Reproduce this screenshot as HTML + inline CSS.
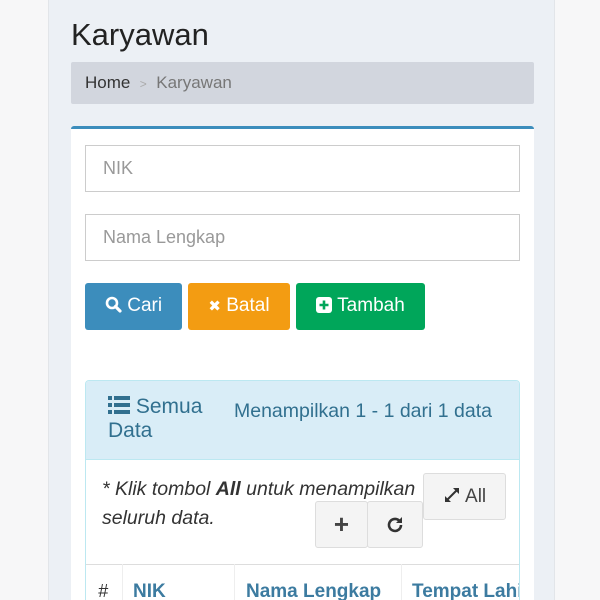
<!DOCTYPE html>
<html style="width:600px;height:600px;overflow:hidden"><head><style>
*{box-sizing:border-box;margin:0;padding:0}
body{width:600px;height:600px;overflow:hidden;background:#f7f7f8;font-family:"Liberation Sans",sans-serif;position:relative}
.wrap{position:absolute;left:48px;top:0;width:507px;height:600px;background:#ecf0f5;border-left:1px solid #e2e5e9;border-right:1px solid #e2e5e9;overflow:hidden}
.a{position:absolute}
h1{position:absolute;left:22px;top:17px;font-size:31px;font-weight:normal;color:#222}
.bc{left:22px;top:62px;width:463px;height:42px;background:#d2d6de;border-radius:2px;font-size:17px;padding:11px 14px;color:#333}
.bc span{color:#777}
.box{left:22px;top:126px;width:463px;height:480px;background:#fff;border-top:3px solid #3c8dbc;border-radius:3px}
.inp{left:14px;width:435px;height:47px;border:1px solid #ccc;font-size:18px;color:#999;padding:12px 17px}
.btn{top:154px;height:47px;color:#fff;font-size:19px;padding:12px 0;text-align:center;border-radius:3px}
.btn svg{vertical-align:-2px}
.pn{left:14px;top:251px;width:435px;height:240px;border:1px solid #bce8f1;border-radius:4px;overflow:hidden}
.ph{height:79px;background:#d9edf7;color:#31708f;border-bottom:1px solid #bce8f1}
.gb{background:#f4f4f4;border:1px solid #ddd;border-radius:3px;color:#444;text-align:center}
</style></head><body>
<div class="wrap">
<h1>Karyawan</h1>
<div class="a bc">Home &nbsp;<span style="color:#aaa;font-size:12px">&gt;</span>&nbsp; <span>Karyawan</span></div>
<div class="a box">
<div class="a inp" style="top:16px">NIK</div>
<div class="a inp" style="top:85px">Nama Lengkap</div>
<div class="a btn" style="left:14px;width:97px;background:#3c8dbc"><svg width="17" height="17" viewBox="0 0 17 17"><circle cx="7" cy="7" r="5" fill="none" stroke="#fff" stroke-width="2.6"/><path d="M10.5 10.5L15 15" stroke="#fff" stroke-width="3.2" stroke-linecap="round"/></svg> Cari</div>
<div class="a btn" style="left:117px;width:102px;background:#f39c12"><span style="font-size:15px">&#10006;</span> Batal</div>
<div class="a btn" style="left:225px;width:129px;background:#00a65a"><svg width="16" height="16" viewBox="0 0 16 16"><rect width="16" height="16" rx="3" fill="#fff"/><path d="M8 3.5v9M3.5 8h9" stroke="#00a65a" stroke-width="2.6"/></svg> Tambah</div>
<div class="a pn">
<div class="ph">
<div class="a" style="left:22px;top:14px;font-size:21px;line-height:24px"><svg width="22" height="18" viewBox="0 0 22 18" style="vertical-align:-1px"><g fill="#31708f"><rect x="0" y="0" width="4" height="4"/><rect x="6" y="0" width="16" height="4"/><rect x="0" y="7" width="4" height="4"/><rect x="6" y="7" width="16" height="4"/><rect x="0" y="14" width="4" height="4"/><rect x="6" y="14" width="16" height="4"/></g></svg> Semua<br>Data</div>
<div class="a" style="left:148px;top:19px;font-size:19.5px;white-space:nowrap">Menampilkan 1 - 1 dari 1 data</div>
</div>
<div class="a" style="left:16px;top:94px;font-size:19.5px;font-style:italic;color:#333;line-height:29px;white-space:nowrap">* Klik tombol <b>All</b> untuk menampilkan<br>seluruh data.</div>
<div class="a gb" style="left:337px;top:92px;width:83px;height:47px;font-size:19px;padding-top:12px"><svg width="18" height="18" viewBox="0 0 18 18" style="vertical-align:-2px"><path d="M3 15L15 3" stroke="#333" stroke-width="2"/><path d="M10 2h6v6z M2 10v6h6z" fill="#333"/></svg> All</div>
<div class="a gb" style="left:229px;top:120px;width:53px;height:47px;font-size:26px;font-weight:bold;padding-top:7px">+</div>
<div class="a gb" style="left:281px;top:120px;width:56px;height:47px;padding-top:13px"><svg width="20" height="20" viewBox="0 0 20 20"><path d="M16 10a6 6 0 1 1-2-4.5" fill="none" stroke="#333" stroke-width="2.6"/><path d="M17 2v6h-6z" fill="#333"/></svg></div>
<div class="a" style="left:0;top:183px;width:435px;border-top:1px solid #ddd"></div>
<div class="a" style="left:12px;top:200px;font-size:18px;color:#333;font-style:italic">#</div>
<div class="a" style="left:36px;top:183px;height:60px;border-left:1px solid #eee"></div>
<div class="a" style="left:47px;top:200px;font-size:19px;font-weight:bold;color:#3c7ba0">NIK</div>
<div class="a" style="left:148px;top:183px;height:60px;border-left:1px solid #eee"></div>
<div class="a" style="left:160px;top:200px;font-size:19px;font-weight:bold;color:#3c7ba0">Nama Lengkap</div>
<div class="a" style="left:315px;top:183px;height:60px;border-left:1px solid #eee"></div>
<div class="a" style="left:326px;top:200px;font-size:19px;font-weight:bold;color:#3c7ba0;white-space:nowrap">Tempat Lahir</div>
</div>
</div>
</div>
</body></html>
